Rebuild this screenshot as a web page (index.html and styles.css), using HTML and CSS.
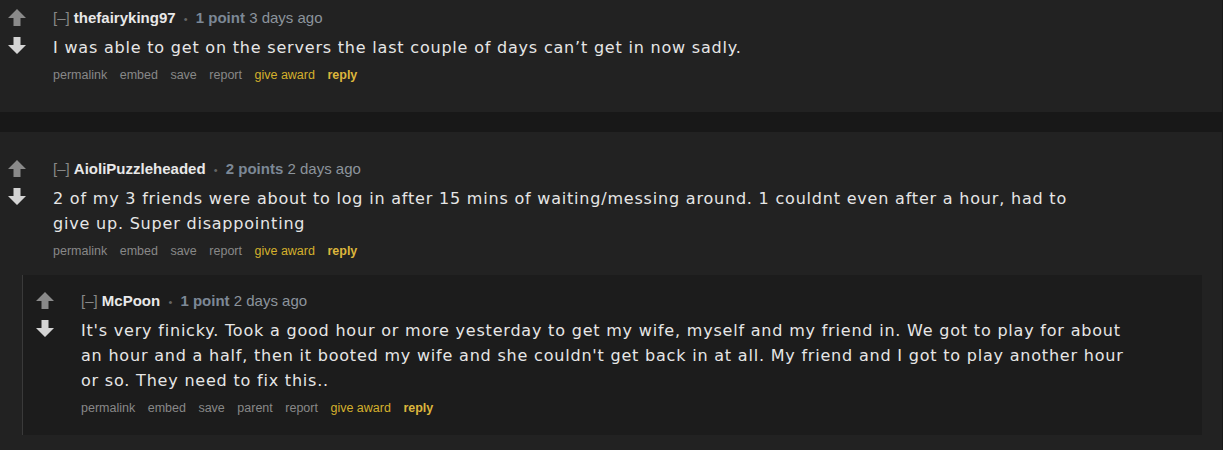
FILE: index.html
```html
<!DOCTYPE html>
<html lang="en">
<head>
  <meta charset="UTF-8" />
  <meta name="viewport" content="width=device-width, initial-scale=1.0" />
  <title>Comments</title>
  <link rel="stylesheet" href="styles.css">
</head>
<body>
  <div class="thread">

    <div class="card">
      <div class="comment">
        <div class="votes">
          <svg class="arrow up" viewBox="0 0 18 17"><path d="M9 0 L18 9 L12.5 9 L12.5 17 L5.5 17 L5.5 9 L0 9 Z"/></svg>
          <svg class="arrow down" viewBox="0 0 18 17"><path d="M5.5 0 L12.5 0 L12.5 8 L18 8 L9 17 L0 8 L5.5 8 Z"/></svg>
        </div>
        <div class="entry">
          <p class="tagline">
            <span class="toggle">[–]</span>
            <span class="author">thefairyking97</span>
            <span class="dot">•</span>
            <span class="score">1 point</span>
            <span class="time">3 days ago</span>
          </p>
          <div class="body">I was able to get on the servers the last couple of days can’t get in now sadly.</div>
          <ul class="buttons">
            <li>permalink</li>
            <li>embed</li>
            <li>save</li>
            <li>report</li>
            <li class="award">give award</li>
            <li class="reply">reply</li>
          </ul>
        </div>
      </div>
    </div>

    <div class="card">
      <div class="comment">
        <div class="votes">
          <svg class="arrow up" viewBox="0 0 18 17"><path d="M9 0 L18 9 L12.5 9 L12.5 17 L5.5 17 L5.5 9 L0 9 Z"/></svg>
          <svg class="arrow down" viewBox="0 0 18 17"><path d="M5.5 0 L12.5 0 L12.5 8 L18 8 L9 17 L0 8 L5.5 8 Z"/></svg>
        </div>
        <div class="entry">
          <p class="tagline">
            <span class="toggle">[–]</span>
            <span class="author">AioliPuzzleheaded</span>
            <span class="dot">•</span>
            <span class="score">2 points</span>
            <span class="time">2 days ago</span>
          </p>
          <div class="body">2 of my 3 friends were about to log in after 15 mins of waiting/messing around. 1 couldnt even after a hour, had to give up. Super disappointing</div>
          <ul class="buttons">
            <li>permalink</li>
            <li>embed</li>
            <li>save</li>
            <li>report</li>
            <li class="award">give award</li>
            <li class="reply">reply</li>
          </ul>
        </div>
      </div>

      <div class="child">
        <div class="comment">
          <div class="votes">
            <svg class="arrow up" viewBox="0 0 18 17"><path d="M9 0 L18 9 L12.5 9 L12.5 17 L5.5 17 L5.5 9 L0 9 Z"/></svg>
            <svg class="arrow down" viewBox="0 0 18 17"><path d="M5.5 0 L12.5 0 L12.5 8 L18 8 L9 17 L0 8 L5.5 8 Z"/></svg>
          </div>
          <div class="entry">
            <p class="tagline">
              <span class="toggle">[–]</span>
              <span class="author">McPoon</span>
              <span class="dot">•</span>
              <span class="score">1 point</span>
              <span class="time">2 days ago</span>
            </p>
            <div class="body">It's very finicky. Took a good hour or more yesterday to get my wife, myself and my friend in. We got to play for about an hour and a half, then it booted my wife and she couldn't get back in at all. My friend and I got to play another hour or so. They need to fix this..</div>
            <ul class="buttons">
              <li>permalink</li>
              <li>embed</li>
              <li>save</li>
              <li>parent</li>
              <li>report</li>
              <li class="award">give award</li>
              <li class="reply">reply</li>
            </ul>
          </div>
        </div>
      </div>
    </div>

  </div>
</body>
</html>
```

FILE: styles.css
```css
body {
  margin: 0;
  background: #181818;
  font-family: 'Liberation Sans', Arial, sans-serif;
  color: #ddd;
}

.thread {
  width: 1222px;
}

.card {
  background: #222;
  padding: 27px 0 27px 0;
}

.card:first-child {
  padding-top: 8px;
}

.card + .card {
  margin-top: 20px;
}

.comment {
  display: flex;
  padding-left: 8px;
}

.votes {
  width: 45px;
  flex-shrink: 0;
  display: flex;
  flex-direction: column;
  gap: 11px;
  padding-top: 1px;
}

.arrow {
  width: 18px;
  height: 17px;
  display: block;
}

.arrow.up {
  fill: #8a8a8a;
}

.arrow.down {
  fill: #d4d4d4;
}

.entry {
  flex: 1;
}

.tagline {
  margin: 0;
  font-size: 15px;
  line-height: 20px;
  color: #888;
}

.tagline .toggle {
  color: #888;
}

.tagline .author {
  color: #e8e8e8;
  font-weight: bold;
}

.tagline .dot {
  color: #666;
  font-size: 11px;
  margin: 0 4px;
}

.tagline .score {
  color: #7c8896;
  font-weight: bold;
}

.tagline .time {
  color: #8c949c;
}

.body {
  font-family: 'DejaVu Sans', sans-serif;
  font-size: 16px;
  letter-spacing: 0.8px;
  line-height: 25px;
  color: #e6e6e6;
  max-width: 1054px;
  margin-top: 6px;
}

.buttons {
  list-style: none;
  margin: 5px 0 0 0;
  padding: 0;
  display: flex;
  gap: 12.5px;
  font-size: 12.5px;
  line-height: 20px;
  color: #888;
}

.buttons .award {
  color: #d4b02c;
}

.buttons .reply {
  color: #dcb63c;
  font-weight: bold;
}

.child {
  margin: 14px 20px 0 22px;
  background: #1c1c1c;
  border-left: 1px solid #3a3a3a;
  padding: 16px 0 17px 0;
}

.child .comment {
  padding-left: 13px;
}
```
